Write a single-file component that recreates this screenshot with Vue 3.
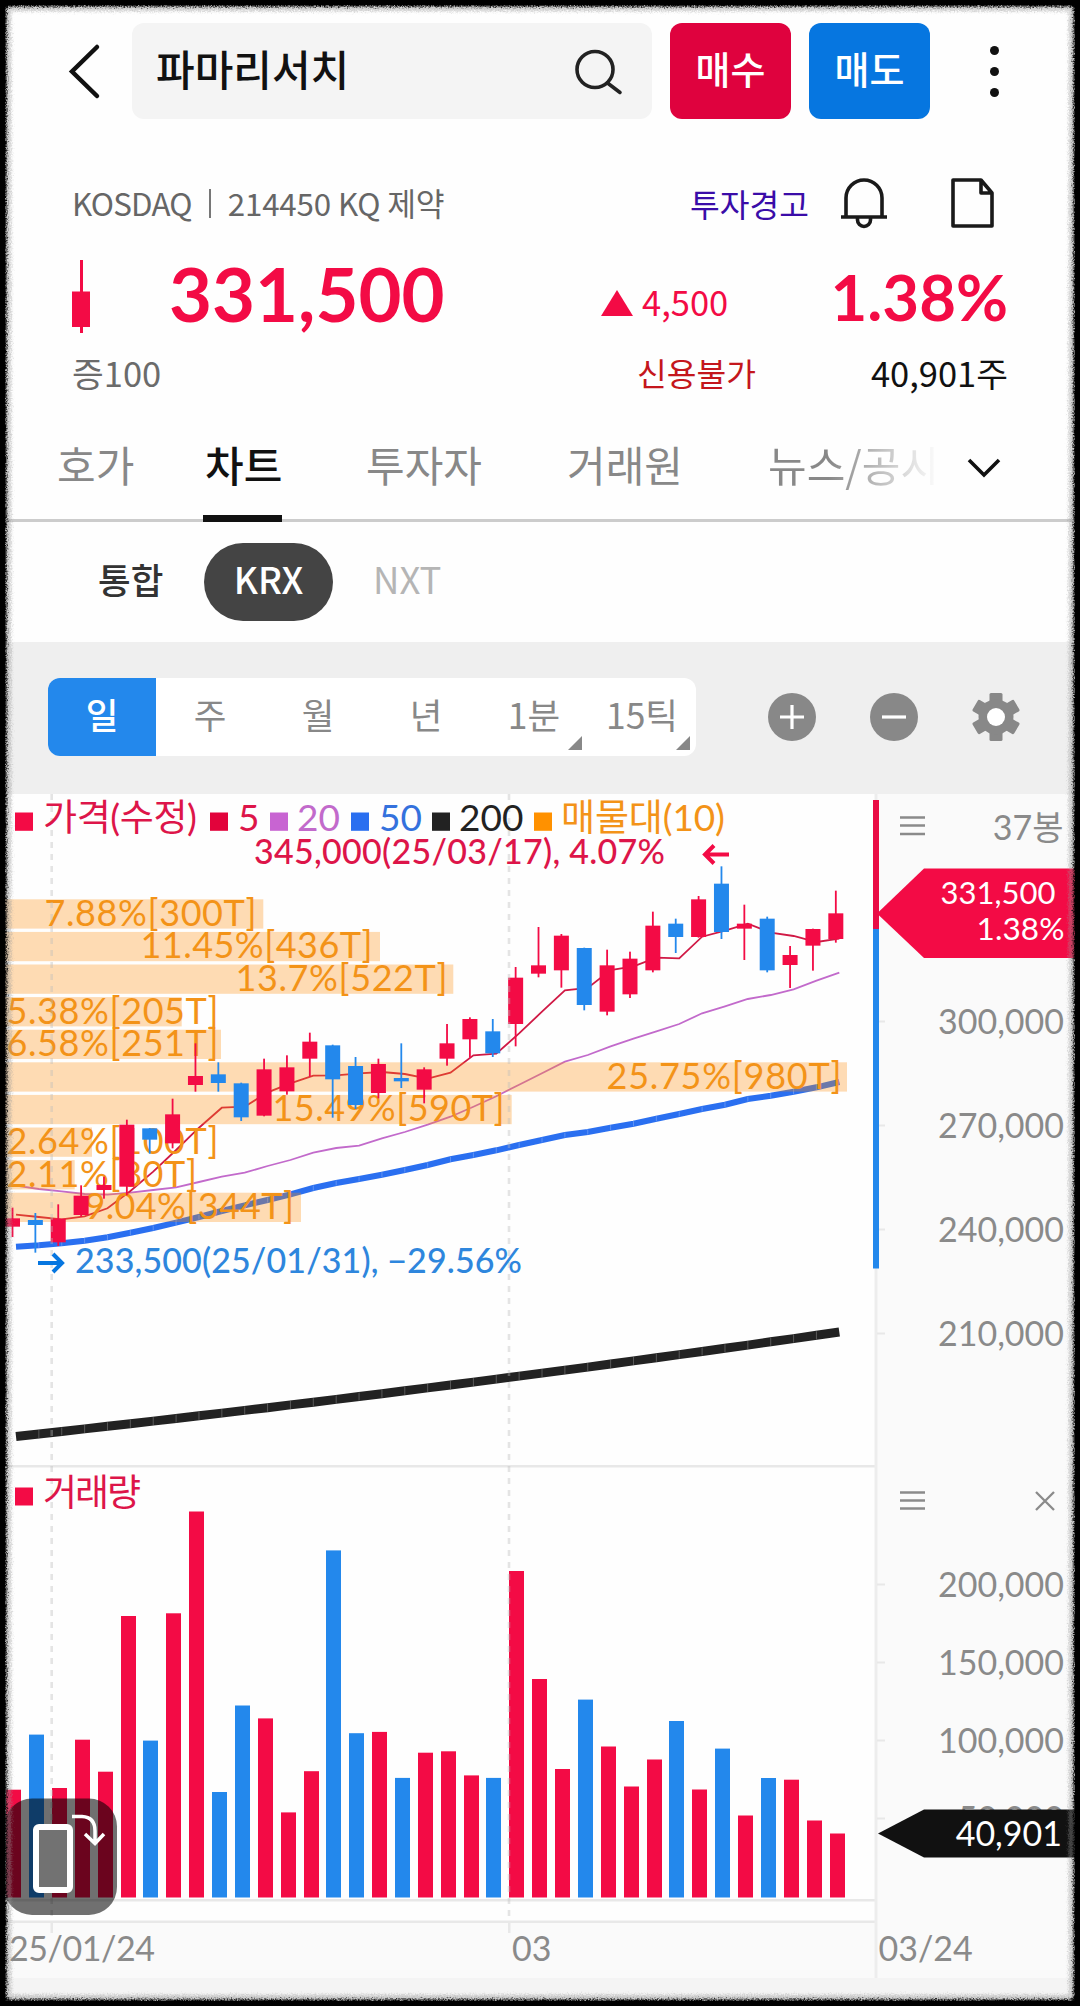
<script setup>
const UP = '#f30b45'
const DOWN = '#2388ec'

const tabs = [
  { label: '호가', cls: 't1' },
  { label: '차트', cls: 't2 active' },
  { label: '투자자', cls: 't3' },
  { label: '거래원', cls: 't4' },
]
const periods = [
  { label: '일', active: true },
  { label: '주' },
  { label: '월' },
  { label: '년' },
  { label: '1분', more: true },
  { label: '15틱', more: true },
]

const STEP = 22.87
const py = (v) => 790 + v / 3

// high, body top, body bottom, low, rising
const candles = [
  [1253, 1285, 1310, 1341, 1], [1269, 1290, 1305, 1388, 0], [1243, 1286, 1357, 1368, 1],
  [1186, 1217, 1275, 1280, 1], [1160, 1185, 1200, 1226, 1], [989, 1004, 1190, 1216, 1],
  [1014, 1015, 1049, 1091, 0], [926, 973, 1060, 1075, 1], [760, 858, 885, 905, 1],
  [817, 853, 879, 905, 0], [878, 880, 982, 993, 0], [806, 838, 977, 979, 1],
  [796, 832, 904, 914, 1], [728, 755, 806, 860, 1], [764, 766, 868, 983, 0],
  [801, 828, 945, 957, 0], [806, 822, 909, 925, 1], [760, 864, 874, 894, 0],
  [832, 838, 899, 940, 1], [702, 760, 806, 827, 1], [682, 687, 748, 803, 1],
  [687, 724, 790, 801, 0], [531, 563, 702, 769, 1], [411, 526, 551, 562, 1],
  [432, 437, 541, 593, 1], [473, 474, 645, 661, 0], [479, 526, 665, 676, 1],
  [485, 506, 613, 624, 1], [365, 407, 541, 547, 1], [386, 401, 441, 489, 0],
  [318, 328, 441, 443, 1], [229, 281, 426, 447, 0], [344, 401, 416, 510, 1],
  [380, 386, 541, 547, 0], [468, 495, 525, 594, 1], [416, 417, 467, 542, 1],
  [302, 370, 447, 458, 1],
].map(([h, t, b, l, up], i) => ({
  x: 12.5 + STEP * i, h: py(h), t: py(t), b: py(b), l: py(l), color: up ? UP : DOWN,
}))

const line = (vals) => vals.map((v, i) => `${(16 + STEP * i).toFixed(1)},${py(v).toFixed(1)}`).join(' ')
const ma5 = line([1274, 1281, 1288, 1279, 1255, 1203, 1145, 1080, 1013, 953, 950, 907, 880, 857, 856, 850, 846, 852, 866, 848, 796, 791, 730, 665, 601, 594, 540, 529, 503, 505, 440, 422, 401, 428, 438, 456, 446])
const ma20 = line([1187, 1197, 1204, 1212, 1214, 1208, 1200, 1192, 1176, 1160, 1148, 1128, 1110, 1088, 1074, 1067, 1045, 1026, 1004, 980, 950, 919, 884, 850, 815, 795, 769, 746, 724, 702, 670, 649, 627, 615, 598, 572, 548])
const ma50v = [1370, 1366, 1360, 1352, 1342, 1328, 1314, 1298, 1281, 1263, 1246, 1230, 1213, 1194, 1179, 1167, 1154, 1140, 1125, 1108, 1095, 1081, 1065, 1050, 1035, 1026, 1013, 1001, 986, 972, 957, 944, 927, 917, 905, 892, 876]
const ma50 = line(ma50v)
const ma200p = ma50v.map((_, i) => {
  const d = STEP * i
  return { x: 16 + d, y: 1436.5 - 0.109 * d - 0.0000218 * d * d }
})
const ma200 = ma200p.map((p) => `${p.x.toFixed(1)},${p.y.toFixed(1)}`).join(' ')
const joints = ma50v.slice(1, -1).map((v, i) => ({ x: 16 + STEP * (i + 1), y: py(v), y2: ma200p[i + 1].y }))

// label, bar end, text start, text end
const profile = [
  ['7.88%[300T]', 263.3, 46, 254], ['11.45%[436T]', 380, 142, 370], ['13.7%[522T]', 453.3, 237, 445],
  ['5.38%[205T]', 181.7, 8, 216], ['6.58%[251T]', 221, 8, 216], ['25.75%[980T]', 847, 608, 839],
  ['15.49%[590T]', 511.7, 274, 502], ['2.64%[100T]', 92, 8, 216], ['2.11%[80T]', 74.7, 8, 194.5],
  ['9.04%[344T]', 301, 86, 291.5],
].map(([label, end, x1, x2], i) => ({ label, end, x1, x2, y: 899.3 + 32.6 * i }))

const volumes = [
  1789.7, 1734.6, 1788, 1739.7, 1771.7, 1616, 1740.6, 1613.3, 1511.5, 1792, 1705.5, 1718.4,
  1812.4, 1771.2, 1550.4, 1733.2, 1731.9, 1777.9, 1752.7, 1751.3, 1775.4, 1777.9, 1571, 1679, 1769,
  1699.6, 1746.5, 1786.5, 1759.5, 1721, 1789.5, 1748.6, 1815.5, 1778, 1779.7, 1820.5, 1833.5,
].map((y, i) => ({ x: Math.round(6.2 + STEP * i), y, color: candles[i].color }))

const legend = [
  { x: 15, c: UP, tx: 43, t: '가격(수정)', tc: '#dd1549', w: 154 },
  { x: 210, c: '#e2033b', tx: 238, t: '5', tc: '#dd1549' },
  { x: 270, c: '#c864d2', tx: 297, t: '20', tc: '#c26acb' },
  { x: 351, c: '#2a6ff0', tx: 379, t: '50', tc: '#3471dd' },
  { x: 432, c: '#222', tx: 459, t: '200', tc: '#222' },
  { x: 534, c: '#ff9100', tx: 561, t: '매물대(10)', tc: '#f39318', w: 164 },
]
const priceAxis = [['300,000', 1021.5], ['270,000', 1125.5], ['240,000', 1229.5], ['210,000', 1333.5]]
const volAxis = [['200,000', 1584.5], ['150,000', 1662.5], ['100,000', 1740.5]]
const ticks = [...priceAxis, ...volAxis, ['50,000', 1818.5]]
</script>

<template>
  <div class="screen">
    <header class="topbar">
      <svg class="back" width="34" height="58" viewBox="0 0 34 58"><path d="M30 5 5 29.5 30 54" /></svg>
      <div class="search">
        <span>파마리서치</span>
        <svg width="54" height="54" viewBox="0 0 54 54"><circle cx="24" cy="25.500" r="18" /><path d="M36.500 39 49 48.500" /></svg>
      </div>
      <button class="btn buy">매수</button>
      <button class="btn sell">매도</button>
      <div class="dots"><i></i><i></i><i></i></div>
    </header>

    <section class="quote">
      <div class="row info">
        <span class="market"><em>KOSDAQ</em><b></b>214450 KQ 제약</span>
        <span class="warn">투자경고</span>
        <svg class="bell" width="50" height="54" viewBox="0 0 50 54">
          <path d="M7 41V22a18 18 0 0 1 36 0V41M2 41H48M18.500 41v3a6.500 6.500 0 0 0 13 0v-3" />
        </svg>
        <svg class="doc" width="46" height="54" viewBox="0 0 46 54">
          <path d="M3 4H31L42 17V50H3ZM31 4V17H42" />
        </svg>
      </div>
      <div class="row price">
        <svg class="mini" width="20" height="76" viewBox="0 0 20 76"><path d="M9 1h3V74h-3zM1 32.500H19V68H1z" /></svg>
        <span class="now">331,500</span>
        <svg class="tri" width="32" height="26" viewBox="0 0 32 26"><path d="M16 0 32 26H0z" /></svg>
        <span class="diff">4,500</span>
        <span class="pct">1.38%</span>
      </div>
      <div class="row extra">
        <span class="margin">증100</span>
        <span class="credit">신용불가</span>
        <span class="vol">40,901주</span>
      </div>
    </section>

    <nav class="tabs">
      <span v-for="t in tabs" :key="t.label" class="tab" :class="t.cls">{{ t.label }}</span>
      <span class="tab t5">뉴스/공시</span>
      <svg class="chev" width="38" height="26" viewBox="0 0 38 26"><path d="M4 5 19 20 34 5" /></svg>
    </nav>

    <div class="exchanges">
      <span class="ex all">통합</span>
      <span class="ex pill">KRX</span>
      <span class="ex nxt">NXT</span>
    </div>

    <div class="toolbar">
      <div class="segments">
        <span v-for="p in periods" :key="p.label" class="seg" :class="{ on: p.active, more: p.more }">{{ p.label }}</span>
      </div>
      <svg class="tool" width="50" height="50" viewBox="-25 -25 50 50">
        <circle r="24" /><path d="M-12 0H12M0-12V12" />
      </svg>
      <svg class="tool" width="50" height="50" viewBox="-25 -25 50 50">
        <circle r="24" /><path d="M-12 0H12" />
      </svg>
      <svg class="tool" width="50" height="50" viewBox="-25 -25 50 50">
        <rect v-for="a in [0, 60, 120]" :key="a" x="-6.500" y="-24" width="13" height="48" rx="1.500" :transform="`rotate(${a})`" />
        <circle r="17.500" /><circle class="hole" r="9" />
      </svg>
    </div>

    <svg class="chart" width="1080" height="1212" viewBox="0 794 1080 1212">
      <rect x="0" y="794" width="1080" height="1212" fill="#fefefe" />
      <rect x="876" y="794" width="204" height="1184" fill="#fafafa" />
      <rect x="0" y="1922" width="1080" height="56" fill="#fafafa" />
      <rect x="0" y="1978" width="1080" height="28" fill="#f4f4f4" />
      <g fill="#e8e8e8">
        <rect x="0" y="1465" width="875" height="2.500" />
        <rect x="0" y="1899" width="875" height="2.500" />
        <rect x="0" y="1920.500" width="875" height="2.500" />
        <rect x="874.500" y="794" width="3" height="1184" fill="#ededed" />
        <rect x="50.500" y="1922" width="2.500" height="11" />
        <rect x="508" y="1922" width="2.500" height="11" />
        <rect v-for="a in ticks" :key="a[0]" x="877" :y="a[1] - 1" width="8" height="2" />
      </g>

      <polyline :points="ma200" fill="none" stroke="#222" stroke-width="9" />
      <polyline :points="ma20" fill="none" stroke="#c26acb" stroke-width="1.800" />
      <polyline :points="ma50" fill="none" stroke="#2a6ff0" stroke-width="6" />
      <g stroke="#fff" stroke-width=".7" opacity=".35">
        <path v-for="j in joints" :key="j.x" :d="`M${j.x} ${j.y - 2.500}v5M${j.x} ${j.y2 - 4}v8`" />
      </g>
      <polyline :points="ma5" fill="none" stroke="#d01945" stroke-width="1.800" />

      <g fill="#ff8c0a" opacity=".3">
        <rect v-for="p in profile" :key="p.label" x="0" :y="p.y" :width="p.end" height="29.300" />
      </g>
      <g class="num" font-size="36" fill="#f39318">
        <text v-for="p in profile" :key="p.label" :x="p.x1 - 1.500" :y="p.y + 26.500" :textLength="p.x2 - p.x1 + 4">{{ p.label }}</text>
      </g>

      <g v-for="c in candles" :key="c.x" :fill="c.color">
        <rect :x="c.x - 0.900" :y="c.h" width="1.800" :height="c.l - c.h" />
        <rect :x="c.x - 7.500" :y="c.t" width="15" :height="c.b - c.t" />
      </g>
      <rect v-for="v in volumes" :key="v.x" :x="v.x" :y="v.y" width="15" :height="1897.500 - v.y" :fill="v.color" />

      <g stroke="#bbb" stroke-opacity=".38" stroke-width="2.600" stroke-dasharray="6 6">
        <path d="M51.700 794V1920M509 794V1920" />
      </g>

      <g class="num" font-size="37">
        <g v-for="l in legend" :key="l.t">
          <rect :x="l.x" y="812.500" width="18" height="18.300" :fill="l.c" />
          <text :x="l.tx" y="831" :fill="l.tc" :textLength="l.w">{{ l.t }}</text>
        </g>
        <rect x="15" y="1487.500" width="18" height="18" :fill="UP" />
        <text x="43" y="1506" fill="#dd1549" textLength="98">거래량</text>
      </g>
      <g class="num" font-size="34" font-weight="500">
        <text x="254" y="863.500" fill="#dd1549" textLength="411">345,000(25/03/17), 4.07%</text>
        <text x="75" y="1272.500" fill="#2e86dd" textLength="447">233,500(25/01/31), −29.56%</text>
      </g>
      <path d="M729 854.500H706M714 845.500 705 854.500 714 863.500" fill="none" :stroke="UP" stroke-width="4" />
      <path d="M38 1263H61M53 1254 62 1263 53 1272" fill="none" stroke="#0676e0" stroke-width="4" />

      <rect x="873" y="800" width="6" height="129" fill="#e90c45" />
      <rect x="873" y="929" width="6" height="339.500" :fill="DOWN" />
      <g stroke="#8a8a8a" stroke-width="2.300" fill="none">
        <path d="M900 817.500h25M900 825.500h25M900 834h25M900 1492.500h25M900 1500.500h25M900 1508.500h25" />
        <path d="M1036 1492 1054 1510M1054 1492 1036 1510" />
      </g>
      <g class="num" font-size="34" fill="#8a8a8a" text-anchor="end">
        <text x="1063.500" y="839.500">37봉</text>
        <text v-for="a in [...priceAxis, ...volAxis]" :key="a[0]" x="1064" :y="a[1] + 12.500" textLength="126">{{ a[0] }}</text>
        <text x="1064" y="1831">50,000</text>
      </g>
      <path d="M877 913.500 924 868.500H1080V958H924Z" :fill="UP" />
      <path d="M878 1833.500 924 1809.500H1080V1857.500H924Z" fill="#111" />
      <g class="num" fill="#fff" text-anchor="end">
        <text x="1055.500" y="903.500" font-size="31">331,500</text>
        <text x="1064.500" y="939.500" font-size="31.500" textLength="88">1.38%</text>
        <text x="1062" y="1845.500" font-size="34">40,901</text>
      </g>
      <g class="num" font-size="34" fill="#8a8a8a">
        <text x="9" y="1960.500" textLength="146">25/01/24</text>
        <text x="512" y="1960.500">03</text>
        <text x="878.500" y="1960.500">03/24</text>
      </g>

      <rect x="4" y="1798.500" width="113" height="116.500" rx="28" fill="#000" opacity=".56" />
      <rect x="36" y="1827" width="34" height="63" rx="3" fill="#727272" stroke="#fff" stroke-width="6" />
      <path d="M72 1816.500H82Q95 1817 95 1831V1842M85 1834 95 1843.500 104 1834" fill="none" stroke="#fff" stroke-width="3.500" />
    </svg>

    <svg class="frame" width="1080" height="2006" viewBox="0 0 1080 2006">
      <defs>
        <filter id="rough" x="0" y="0" width="1080" height="2006" filterUnits="userSpaceOnUse" color-interpolation-filters="sRGB">
          <feTurbulence type="fractalNoise" baseFrequency=".7" numOctaves="2" seed="4" result="n" />
          <feGaussianBlur in="SourceGraphic" stdDeviation=".8" result="b" />
          <feDisplacementMap in="b" in2="n" scale="6" xChannelSelector="R" yChannelSelector="G" />
        </filter>
      </defs>
      <g filter="url(#rough)" fill="none">
        <rect x="8" y="8" width="1064" height="1990" rx="5" stroke="#999" stroke-opacity=".4" stroke-width="7" />
        <rect x="-13.500" y="-13.500" width="1107" height="2033" rx="24" stroke="#000" stroke-width="40" />
      </g>
      <rect x="1" y="1" width="1078" height="2004" fill="none" stroke="#000" stroke-width="8" />
    </svg>
  </div>
</template>

<style>
body { margin: 0; background: #000; }
</style>

<style scoped>
.screen {
  position: relative;
  width: 1080px;
  height: 2006px;
  overflow: hidden;
  background: #fefefe;
  font-family: 'Noto Sans CJK KR', sans-serif;
  color: #111;
}
svg { display: block; flex: none; }
.frame { position: absolute; left: 0; top: 0; pointer-events: none; }
.topbar { display: flex; align-items: center; height: 96px; padding: 23px 0 0 67px; }
.back path { fill: none; stroke: #111; stroke-width: 4.5; stroke-linecap: round; }
.search {
  display: flex; align-items: center; justify-content: space-between;
  box-sizing: border-box; width: 520px; height: 96px; margin-left: 31px; padding: 0 27px 0 24px;
  border-radius: 12px; background: #f4f4f4;
  font-size: 42px; font-weight: 500; line-height: 90px;
}
.search span { padding-bottom: 6px; }
.search svg { fill: none; stroke: #222; stroke-width: 3.6; stroke-linecap: round; }
.btn {
  width: 121px; height: 96px; margin-left: 18px; padding: 0 0 6px; border: 0; border-radius: 12px;
  color: #fff; font: 500 38px/90px 'Noto Sans CJK KR', sans-serif;
}
.buy { background: #df023e; }
.sell { background: #0676e0; }
.dots { display: flex; flex-direction: column; gap: 12px; margin-left: 60px; }
.dots i { width: 9px; height: 9px; border-radius: 50%; background: #111; }

.row { display: flex; align-items: center; }
.info { height: 54px; margin-top: 57px; padding-left: 72px; font-size: 32px; line-height: 52px; color: #666; }
.market { display: flex; align-items: center; width: 618px; white-space: pre; font-size: 31.3px; letter-spacing: -0.15px; }
.market em { font-style: normal; letter-spacing: -0.8px; }
.market b { width: 2px; height: 29px; margin: 0 17px; background: #777; }
.warn { width: 121px; font-size: 32.3px; color: #3a0ca8; }
.bell, .doc { fill: none; stroke: #1a1a1a; stroke-width: 3.6; stroke-linejoin: round; }
.bell { margin-left: 28px; }
.doc { margin-left: 61px; }
.price { height: 76px; margin-top: 29px; padding-left: 71px; color: #f30b45; fill: #f30b45; }
.now { width: 432px; margin-left: 78px; padding-bottom: 6px; font: 700 74.2px/70px Lato, sans-serif; }
.tri { margin-top: 11px; }
.diff { width: 179px; margin-left: 9px; padding-top: 8px; font-size: 34.5px; line-height: 50px; }
.pct { width: 187px; text-align: right; font: 700 63.5px/76px Lato, sans-serif; }
.extra { height: 48px; padding: 13px 0 5px 72px; font-size: 34.5px; line-height: 48px; }
.margin { width: 565px; color: #6b6b6b; }
.credit { width: 130px; color: #c4161c; font-size: 32.3px; }
.vol { width: 241px; text-align: right; }

.tabs { display: flex; height: 88px; margin-top: 30px; border-bottom: 3px solid #ccc; font-size: 42px; line-height: 66px; color: #888; }
.tab { box-sizing: border-box; white-space: nowrap; }
.t1 { margin-left: 57px; width: 146px; }
.t2 { width: 79px; padding-left: 2px; color: #111; font-weight: 500; height: 91px; border-bottom: 7px solid #111; }
.t3 { margin-left: 84px; width: 201px; }
.t4 { width: 201px; }
.t5 { width: 172px; overflow: hidden; background: linear-gradient(90deg, #888 35%, #fff 100%); background-clip: text; color: transparent; }
.chev { margin: 24px 0 0 25px; fill: none; stroke: #111; stroke-width: 3.6; }
.exchanges { display: flex; align-items: center; height: 120px; font-size: 35.5px; }
.all { margin-left: 98px; width: 106px; font-weight: 500; color: #333; line-height: 72px; padding-bottom: 6px; }
.pill { width: 129px; height: 78px; border-radius: 39px; background: #444; color: #fff; text-align: center; line-height: 72px; font-weight: 500; font-size: 36.5px; }
.nxt { margin-left: 40px; color: #b5b5b5; font-size: 36.5px; line-height: 72px; padding-bottom: 6px; }
.toolbar { display: flex; align-items: center; box-sizing: border-box; height: 152px; padding-left: 48px; padding-bottom: 2px; background: #efefef; }
.segments { display: flex; width: 648px; margin-right: 71px; border-radius: 12px; overflow: hidden; background: #fff; }
.seg { position: relative; width: 108px; height: 78px; text-align: center; font-size: 35.5px; line-height: 72px; color: #888; }
.seg.on { background: #2388ec; color: #fff; font-weight: 500; }
.more::after { content: ''; position: absolute; right: 6px; bottom: 6px; border-left: 14px solid transparent; border-bottom: 14px solid #888; }
.tool { fill: #888; margin-right: 52px; }
.tool path { stroke: #fff; stroke-width: 3.2; }
.tool .hole { fill: #fff; }
.num { font-family: Lato, 'Noto Sans CJK KR', sans-serif; }
</style>
